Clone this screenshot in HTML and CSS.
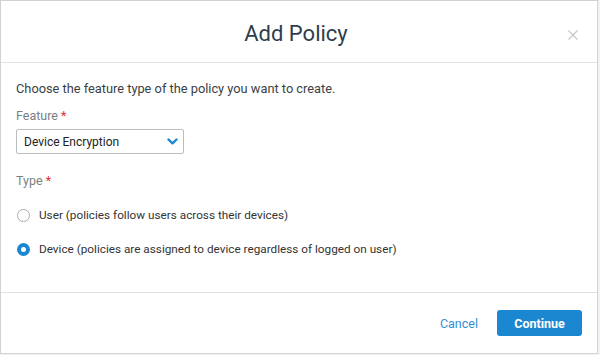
FILE: index.html
```html
<!DOCTYPE html>
<html lang="en">
<head>
 <title>Add Policy</title>
 <link rel="stylesheet" href="styles.css">
</head>
<body>

 <div class="dialog">
 <div class="dialog-header">
 <h2>Add Policy</h2>
 <svg class="close-btn" width="10" height="10" viewBox="0 0 10 10">
 <path d="M0.5 0.5 L9.5 9.5 M9.5 0.5 L0.5 9.5" stroke="#c4c7ca" stroke-width="1.1"/>
 </svg>
 </div>

 <div class="dialog-body">
 <p class="intro">Choose the feature type of the policy you want to create.</p>

 <label class="field-label">Feature <span class="req">*</span></label>
 <div class="select-box">
 <span>Device Encryption</span>
 <svg class="chevron" width="11" height="7" viewBox="0 0 11 7">
 <path d="M1.5 1.5 L5.5 5.3 L9.5 1.5" fill="none" stroke="#1a87d0" stroke-width="2.4" stroke-linecap="round" stroke-linejoin="round"/>
 </svg>
 </div>

 <label class="field-label type-label">Type <span class="req">*</span></label>
 <div class="radio-row">
 <span class="radio"></span>
 <span>User (policies follow users across their devices)</span>
 </div>
 <div class="radio-row">
 <span class="radio checked"></span>
 <span>Device (policies are assigned to device regardless of logged on user)</span>
 </div>
 </div>

 <div class="dialog-footer">
 <a href="#" class="cancel-link">Cancel</a>
 <button class="continue-btn">Continue</button>
 </div>
 </div>

</body>
</html>
```

FILE: styles.css
```css
 body {
 margin: 0;
 padding: 0;
 background: #f2f2f2;
 font-family: Roboto, Arial, sans-serif;
 color: #333;
 }

 .dialog {
 width: 596px;
 height: 352px;
 background: white;
 border: 1px solid #cfd3d6;
 display: flex;
 flex-direction: column;
 }

 .dialog-header {
 height: 61px;
 border-bottom: 1px solid #dfe2e5;
 display: flex;
 align-items: center;
 justify-content: center;
 position: relative;
 }

 .dialog-header h2 {
 margin: 0;
 font-size: 22px;
 font-weight: normal;
 color: #2f3e4e;
 padding-top: 4px;
 padding-right: 6px;
 }

 .close-btn {
 position: absolute;
 right: 19px;
 top: 29px;
 }

 .dialog-body {
 flex: 1;
 padding: 18px 15px 0;
 border-bottom: 1px solid #dfe2e5;
 font-size: 12.5px;
 }

 .intro {
 margin: 0 0 12px;
 color: #3b3f44;
 font-size: 12.8px;
 }

 .field-label {
 display: block;
 color: #7a7f85;
 margin-bottom: 6px;
 }

 .req {
 color: #e03030;
 }

 .select-box {
 width: 154px;
 height: 23px;
 border: 1px solid #b9bdc2;
 border-radius: 2px;
 display: flex;
 align-items: center;
 justify-content: space-between;
 padding: 0 5px 0 7px;
 color: #222;
 font-size: 12px;
 }

 .type-label {
 margin-top: 19px;
 }

 .radio-row {
 display: flex;
 align-items: center;
 gap: 9px;
 margin-top: 20px;
 color: #333;
 font-size: 11.75px;
 padding-left: 1px;
 }

 .radio {
 width: 11px;
 height: 11px;
 border: 1px solid #a9adb2;
 border-radius: 50%;
 box-sizing: content-box;
 }

 .radio.checked {
 width: 5px;
 height: 5px;
 border: 4px solid #1a87d0;
 }

 .dialog-footer {
 height: 60px;
 display: flex;
 align-items: center;
 justify-content: flex-end;
 gap: 19px;
 padding-right: 15px;
 }

 .cancel-link {
 color: #2f8fd6;
 text-decoration: none;
 font-size: 12.5px;
 }

 .continue-btn {
 width: 85px;
 height: 26px;
 border: none;
 border-radius: 3px;
 background: #1a87d0;
 color: white;
 font-family: Roboto, Arial, sans-serif;
 font-weight: bold;
 font-size: 12.5px;
 }
```
